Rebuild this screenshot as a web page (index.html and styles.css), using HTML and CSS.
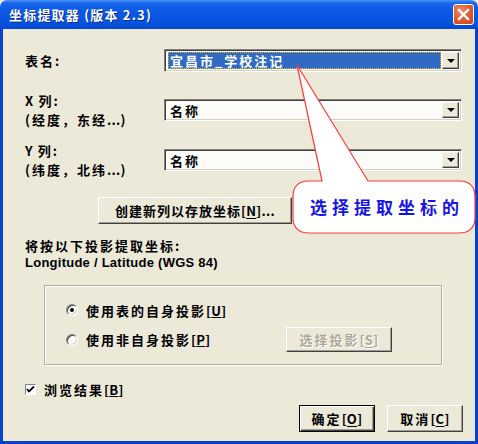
FILE: index.html
```html
<!DOCTYPE html>
<html lang="zh-CN">
<head>
<meta charset="utf-8">
<title>坐标提取器</title>
<link rel="stylesheet" href="styles.css">
</head>
<body>
<div class="window">
  <div class="titlebar">
    <span class="title">坐标提取器 (版本 2.3)</span>
    <span class="close">
      <svg width="13" height="13" viewBox="0 0 13 13"><path d="M2 2 L11 11 M11 2 L2 11" stroke="#fff" stroke-width="2.4" stroke-linecap="square"/></svg>
    </span>
  </div>
  <div class="body">
    <div class="row row-table">
      <div class="label">表名:</div>
      <div class="combo">
        <div class="field"><span class="sel">宜昌市_学校注记</span></div>
        <div class="arrow"><span class="tri"></span></div>
      </div>
    </div>
    <div class="row row-col">
      <div class="label"><div><span class="lt">X</span> 列:</div><div>(经度，东经<span class="lt">...</span>)</div></div>
      <div class="combo">
        <div class="field"><span class="val">名称</span></div>
        <div class="arrow"><span class="tri"></span></div>
      </div>
    </div>
    <div class="row row-col row-y">
      <div class="label"><div><span class="lt">Y</span> 列:</div><div>(纬度，北纬<span class="lt">...</span>)</div></div>
      <div class="combo">
        <div class="field"><span class="val">名称</span></div>
        <div class="arrow"><span class="tri"></span></div>
      </div>
    </div>
    <div class="btn-row">
      <button class="btn create">创建新列以存放坐标<span class="lt">[<u>N</u>]...</span></button>
    </div>
    <div class="proj-label">将按以下投影提取坐标:</div>
    <div class="proj-name">Longitude / Latitude (WGS 84)</div>
    <div class="group">
      <div class="opt"><span class="radio checked"></span><span>使用表的自身投影<span class="lt">[<u>U</u>]</span></span></div>
      <div class="opt opt2"><span class="radio"></span><span>使用非自身投影<span class="lt">[<u>P</u>]</span></span><button class="btn disabled">选择投影<span class="lt">[<u>S</u>]</span></button></div>
    </div>
    <div class="check-row">
      <span class="checkbox"><svg width="9" height="9" viewBox="0 0 9 9"><path d="M1 4 L3 6.5 L8 1.5" fill="none" stroke="#000" stroke-width="1.8"/></svg></span>
      <span>浏览结果<span class="lt">[<u>B</u>]</span></span>
    </div>
    <div class="actions">
      <button class="btn default">确定<span class="lt">[<u>O</u>]</span></button>
      <button class="btn">取消<span class="lt">[<u>C</u>]</span></button>
    </div>
  </div>
  <div class="callout">
    <svg class="callout-shape" width="478" height="444" viewBox="0 0 478 444">
      <path d="M322 181 L297 65 L368 181 H459 Q475 181 475 197 V217 Q475 233 459 233 H309 Q293 233 293 217 V197 Q293 181 309 181 Z" fill="#fff" stroke="#ff3b3b" stroke-width="1.2"/>
    </svg>
    <div class="callout-text">选择提取坐标的</div>
  </div>
</div>
</body>
</html>
```
FILE: styles.css
```css
* { box-sizing: border-box; }
html, body { margin: 0; padding: 0; background: #ece9d8; }

.window {
  position: relative;
  width: 478px;
  height: 444px;
  display: flex;
  flex-direction: column;
  font-family: "Noto Sans CJK SC", "Noto Sans", sans-serif;
  font-size: 13px;
  letter-spacing: 2px;
  font-weight: bold;
  color: #000;
  overflow: hidden;
}
.lt { letter-spacing: 0.3px; }

.titlebar {
  height: 29px;
  flex: none;
  display: flex;
  align-items: center;
  justify-content: space-between;
  padding: 0 4px 0 9px;
  background: linear-gradient(to bottom, #4a96f8 0, #1a66ea 3px, #0a58e4 40%, #0653de 80%, #0448cf 100%);
  border-radius: 7px 7px 0 0;
}
.title {
  color: #fff;
  font-size: 13px;
  letter-spacing: 1.2px;
  line-height: 16px;
  text-shadow: 1px 1px 0 #0a2a90;
}
.close {
  width: 21px;
  height: 21px;
  border: 1px solid #fff;
  border-radius: 3px;
  background: radial-gradient(circle at 35% 30%, #f08a62 0, #e0572c 55%, #c8401c 100%);
  display: flex;
  align-items: center;
  justify-content: center;
}

.body {
  flex: 1;
  background: #ece9d8;
  border: 3px solid #0841d2;
  border-top: none;
  padding: 0 13px 0 22px;
  display: flex;
  flex-direction: column;
}

.row { display: flex; }
.label { width: 139px; flex: none; line-height: 19px; }
.row-table { margin-top: 20px; height: 23px; align-items: center; }
.row-col { margin-top: 19px; }
.row-y { margin-top: 12px; }
.row-col .combo { margin-top: 8px; height: 22px; }

.combo {
  flex: 1;
  height: 23px;
  display: flex;
  border-top: 1px solid #808080;
  border-left: 1px solid #808080;
  border-right: 1px solid #fff;
  border-bottom: 1px solid #fff;
  box-shadow: inset 1px 1px 0 #404040, inset -1px -1px 0 #d4d0c8;
  background: #fbfbf8;
  padding: 2px;
}
.field {
  flex: 1;
  display: flex;
  align-items: center;
  padding-left: 1px;
  line-height: 17px;
}
.val { padding-left: 2px; }
.sel {
  flex: 1;
  align-self: stretch;
  display: flex;
  align-items: center;
  background: #316ac5;
  color: #fff;
  padding-left: 2px;
  outline: 1px dotted #e8c000;
  outline-offset: -1px;
  margin-right: 1px;
}
.arrow {
  width: 17px;
  flex: none;
  background: #ece9d8;
  border-top: 1px solid #f4f3ee;
  border-left: 1px solid #f4f3ee;
  border-right: 1px solid #404040;
  border-bottom: 1px solid #404040;
  box-shadow: inset -1px -1px 0 #a0a0a0;
  display: flex;
  align-items: center;
  justify-content: center;
}
.tri {
  width: 0;
  height: 0;
  border-left: 4px solid transparent;
  border-right: 4px solid transparent;
  border-top: 4px solid #000;
}

.btn {
  font: inherit;
  letter-spacing: inherit;
  color: #000;
  background: #ece9d8;
  border-top: 1px solid #fff;
  border-left: 1px solid #fff;
  border-right: 1px solid #404040;
  border-bottom: 1px solid #404040;
  box-shadow: inset -1px -1px 0 #a09e94;
  padding: 0;
  height: 27px;
  line-height: 17px;
}
.btn u { text-underline-offset: 2px; }
.btn-row { margin-top: 18px; padding-left: 73px; display: flex; }
.create { width: 194px; letter-spacing: 1px; }

.proj-label { margin-top: 13px; line-height: 18px; }
.proj-name {
  font-family: "Liberation Sans", Arial, sans-serif;
  font-size: 13px;
  letter-spacing: 0.25px;
  line-height: 16px;
}

.group {
  margin: 14px 0 0 19px;
  width: 398px;
  height: 80px;
  border: 1px solid #b0ae9f;
  box-shadow: 1px 1px 0 #fff, inset 1px 1px 0 #fff;
  padding: 14px 49px 0 21px;
  display: flex;
  flex-direction: column;
}
.opt { display: flex; align-items: center; height: 20px; }
.opt2 { margin-top: 7px; height: 25px; }
.radio {
  width: 12px;
  height: 12px;
  border-radius: 50%;
  flex: none;
  margin-right: 8px;
  background: #fff;
  border: 1px solid;
  border-color: #808080 #fff #fff #808080;
  box-shadow: inset 1px 1px 0 #404040, inset -1px -1px 0 #d4d0c8;
  position: relative;
}
.radio.checked::after {
  content: "";
  position: absolute;
  left: 3px;
  top: 3px;
  width: 4px;
  height: 4px;
  border-radius: 50%;
  background: #000;
}
.btn.disabled {
  margin-left: auto;
  width: 106px;
  height: 25px;
  color: #aca899;
  text-shadow: 1px 1px 0 #fff;
}

.check-row {
  margin-top: 15px;
  height: 18px;
  display: flex;
  align-items: center;
}
.checkbox {
  width: 11px;
  height: 11px;
  margin-right: 8px;
  background: #fff;
  border: 1px solid;
  border-color: #808080 #fff #fff #808080;
  display: flex;
  align-items: center;
  justify-content: center;
}

.actions {
  margin-top: 7px;
  display: flex;
  justify-content: flex-end;
  gap: 12px;
  margin-right: -1px;
}
.actions .btn { width: 76px; }
.btn.default {
  border: 1px solid #000;
  box-shadow: inset 1px 1px 0 #fff, inset -1px -1px 0 #404040, inset -2px -2px 0 #a09e94;
}

.callout {
  position: absolute;
  left: 0;
  top: 0;
  width: 478px;
  height: 444px;
  pointer-events: none;
}
.callout-shape { position: absolute; left: 0; top: 0; }
.callout-text {
  position: absolute;
  left: 310px;
  top: 194px;
  color: #1414e6;
  font-size: 17px;
  letter-spacing: 5px;
  line-height: 26px;
  font-weight: bold;
}
```
